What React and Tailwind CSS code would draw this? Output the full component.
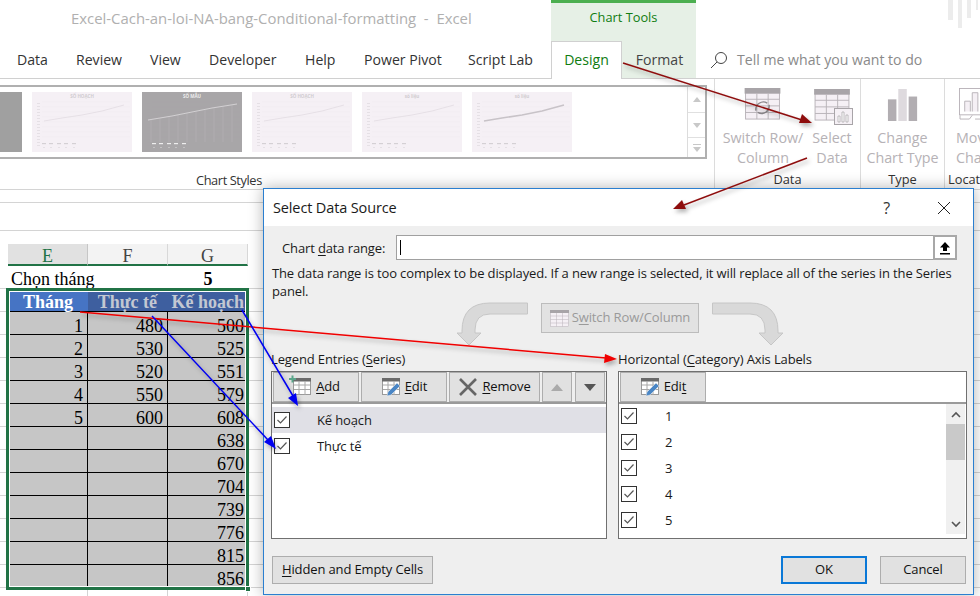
import React from "react";

const UI = "font-['Open_Sans','Noto_Sans',sans-serif]";

function Mn({ children }) {
  return <u className="underline underline-offset-2 decoration-1">{children}</u>;
}

function Thumb({ dark, line = "#e2dce2", thick, title = "SỐ HOẠCH", sticks, w = 100 }) {
  const pts = "12,29 30,26 50,23 70,19 92,13";
  return (
    <div className={`h-[60px] shrink-0 overflow-hidden ${dark ? "bg-[#a8a6a8]" : "bg-[#f5f0f5]"}`} style={{ width: w }}>
      <svg width="100" height="60" viewBox="0 0 100 60">
        <text x="50" y="6" textAnchor="middle" fontSize="4.500" fontWeight="700" fill={dark ? "#eee" : "#d0ccd0"}>{title}</text>
        {[10, 15, 20, 25, 30, 35, 40, 45].map((y) => (
          <line key={y} x1="10" x2="98" y1={y} y2={y} stroke={dark ? "#a8a6a8" : "#f0ecf0"} strokeWidth=".6" />
        ))}
        {[2, 4, 6, 8, 10, 12, 14, 16, 18, 20, 22, 24, 26, 28, 30].map((y) => (
          <rect key={y} x="5" y={8 + y * 1.5} width="3" height=".8" fill={dark ? "#a8a6a8" : "#e2dde2"} />
        ))}
        {sticks && [6, 15, 24, 33, 42, 51, 60, 69, 78, 87].map((x, i) => (
          <line key={x} x1={x + 3} x2={x + 3} y1={28 - i * 1.7} y2="50" stroke="#b5b3b5" strokeWidth=".6" />
        ))}
        <polyline points={dark ? "6,28 30,24 50,20 70,16 95,12" : pts} fill="none" stroke={dark ? "#dddbdd" : line} strokeWidth={thick ? 1.6 : 0.8} />
        {[10, 17, 25, 32, 40].map((x) => (
          <g key={x}>
            <rect x={x} y="51" width="4" height="1.2" fill={dark ? "#eee" : "#d4d0d4"} />
            <rect x={x + 1.5} y="55" width="1" height="1" fill={dark ? "#ddd" : "#d4d0d4"} />
          </g>
        ))}
      </svg>
    </div>
  );
}

function GridIcon({ small }) {
  return (
    <svg width={small ? 19 : 36} height={small ? 17 : 32} viewBox="0 0 38 34" fill="none">
      <rect x="1" y="5" width="36" height="28" fill="#f5f0f5" stroke="#b8b2b8" strokeWidth="1" />
      <rect x="0" y="0" width="38" height="6" fill="#a8a4a8" />
      {[13, 25].map((x) => <line key={x} x1={x} x2={x} y1="6" y2="33" stroke="#b8b2b8" />)}
      {[12, 19, 26].map((y) => <line key={y} x1="1" x2="37" y1={y} y2={y} stroke="#b8b2b8" />)}
    </svg>
  );
}

function TableIcon({ plus, pencil }) {
  return (
    <svg width="20" height="20" viewBox="0 0 20 20" fill="none" className="shrink-0 overflow-visible">
      <rect x="1.500" y="3.500" width="17" height="14" fill="#fff" stroke="#9a9a9a" />
      <rect x="1" y="1" width="18" height="3.500" fill="#6a6a6a" />
      {[7, 13].map((x) => <line key={x} x1={x} x2={x} y1="4" y2="18" stroke="#a8a8a8" />)}
      {[8, 12.5].map((y) => <line key={y} x1="2" x2="18" y1={y} y2={y} stroke="#a8a8a8" />)}
      {plus && <path d="M-3 1h2.500v-2.500h2v2.500h2.500v2h-2.500v2.500h-2v-2.500h-2.500z" fill="#5aa58a" />}
      {pencil && <path d="M6 19l1-4 9-9 3 3-9 9z" fill="#4a86c5" stroke="#eee" strokeWidth=".5" />}
    </svg>
  );
}

function Check() {
  return (
    <span className="flex h-4 w-4 shrink-0 items-center justify-center border border-[#333] bg-white">
      <svg width="12" height="10" viewBox="0 0 12 10" fill="none">
        <path d="M1.500 5l3 3 6-6.500" stroke="#555" strokeWidth="1.200" />
      </svg>
    </span>
  );
}

function Btn({ className = "", children }) {
  return (
    <button className={`flex items-center justify-center border border-[#adadad] bg-[#e1e1e1] text-[#111] ${className}`}>
      {children}
    </button>
  );
}

const CurveArrow = ({ flip }) => (
  <svg width="72" height="44" viewBox="0 0 72 44" className={flip ? "shrink-0 -scale-x-100" : "shrink-0"}>
    <path d="M70.500 1H33Q5 1 5 29V31H0L12 43L24 31H18V28Q18 12 33 12H70.500Z" fill="#d9d9d9" stroke="#c6c6c6" />
  </svg>
);

const tabs = [
  ["Data", 59], ["Review", 74], ["View", 59], ["Developer", 96], ["Help", 59], ["Power Pivot", 104], ["Script Lab", 83],
];

const rows = [
  ["1", "480", "500"], ["2", "530", "525"], ["3", "520", "551"], ["4", "550", "579"], ["5", "600", "608"],
  ["", "", "638"], ["", "", "670"], ["", "", "704"], ["", "", "739"], ["", "", "776"], ["", "", "815"], ["", "", "856"],
];

function Sheet() {
  return (
    <div className="font-['Liberation_Serif',serif] text-[18px] text-black">
      <div className="flex h-[22px] pl-[8px] leading-[24px]">
        <div className="w-[80px] border-r border-b-2 border-r-[#c6c6c6] border-b-[#217346] bg-[#e1e1e1] text-center text-[#217346]">E</div>
        <div className="w-[80px] border-r border-b-2 border-r-[#d8d8d8] border-b-[#217346] bg-[#f3f3f3] text-center text-[#444]">F</div>
        <div className="w-[80px] border-r border-b-2 border-r-[#d8d8d8] border-b-[#217346] bg-[#f3f3f3] text-center text-[#444]">G</div>
      </div>
      <div className="flex h-[23px] leading-[27px]">
        <div className="w-[8px] border-b border-[#d4d4d4]" />
        <div className="w-[160px] pl-[3px]">Chọn tháng</div>
        <div className="w-[80px] text-center font-bold">5</div>
        <div className="flex-1 border-b border-[#d4d4d4]" />
      </div>
      <div className="flex h-[23px] leading-[27px] font-bold">
        <div className="w-[8px] border-b border-[#d4d4d4]" />
        <div className="w-[80px] border-b border-black bg-[#4674c4] pr-[15px] pl-2 text-right text-white">Tháng</div>
        <div className="w-[80px] border-b border-black bg-[#3e5f9f] pr-[11px] text-right text-[#c3c8d2]">Thực tế</div>
        <div className="w-[80px] whitespace-nowrap border-b border-black bg-[#3e5f9f] pr-[4px] text-right text-[#c3c8d2]">Kế hoạch</div>
        <div className="flex-1 border-b border-[#d4d4d4]" />
      </div>
      {rows.map((r, i) => (
        <div key={i} className="flex h-[23px] leading-[28px]">
          <div className="w-[8px] border-b border-[#d4d4d4]" />
          {r.map((c, j) => (
            <div key={j} className={`h-[23px] w-[80px] border-b border-black bg-[#c6c6c6] pr-[4px] text-right ${j < 2 ? "border-r" : ""}`}>{c}</div>
          ))}
          <div className="flex-1 border-b border-[#d4d4d4]" />
        </div>
      ))}
      <div className="flex h-[8px]">
        <div className="w-[88px] border-r border-[#d4d4d4]" />
        <div className="w-[80px] border-r border-[#d4d4d4]" />
        <div className="w-[80px] border-r border-[#d4d4d4]" />
      </div>
    </div>
  );
}

function Dialog() {
  return (
    <div className={`absolute top-[188px] left-[263px] flex h-[407px] w-[711px] flex-col border border-[#2b7fd0] bg-white text-[13px] tracking-[-0.13px] text-[#1a1a1a] shadow-[0_0_14px_rgba(0,0,0,0.3)] ${UI}`}>
      <div className="flex h-[37px] shrink-0 items-center pl-[9px] text-[14.500px]">
        <span>Select Data Source</span>
        <span className="ml-auto text-[16px] text-[#333]">?</span>
        <svg width="14" height="14" viewBox="0 0 14 14" className="mr-[22px] ml-[47px]" fill="none"><path d="M1 1l12 12M13 1L1 13" stroke="#222" /></svg>
      </div>
      <div className="flex flex-1 flex-col bg-[#efefef]">
        <div className="mt-[9px] flex h-[25px] items-center">
          <span className="w-[132px] pt-[2px] pl-[18px] whitespace-nowrap">Chart <Mn>d</Mn>ata range:</span>
          <div className="flex h-[25px] w-[561px] items-center border border-[#a0a0a0] bg-white pl-[3px]">
            <span className="h-[15px] w-px bg-black" />
            <span className="mr-[-1px] ml-auto flex h-[25px] w-[24px] items-center justify-center border-2 border-[#a8a8a8] bg-white">
              <svg width="12" height="14" viewBox="0 0 12 14"><path d="M6 1L1 6.500h3V10h4V6.500h3zM1 12h10v1.500H1z" fill="#000" /></svg>
            </span>
          </div>
        </div>
        <p className="mt-[4px] w-[695px] pl-[8px] leading-[18px]">
          The data range is too complex to be displayed. If a new range is selected, it will replace all of the series in the Series panel.
        </p>
        <div className="mt-[2px] ml-[193px] flex h-[44px] items-start gap-[12px]">
          <CurveArrow />
          <button className="mt-[1px] flex h-[30px] w-[158px] shrink-0 items-center justify-center gap-[3px] border border-[#bcbcbc] bg-[#e2e2e2] text-[#9a9a9a]">
            <GridIcon small />
            <span className="whitespace-nowrap">S<Mn>w</Mn>itch Row/Column</span>
          </button>
          <CurveArrow flip />
        </div>
        <div className="mt-[4px] flex pl-[7px]">
          <div className="w-[336px] leading-[18px]">Legend Entries (<Mn>S</Mn>eries)</div>
          <div className="ml-[11px] leading-[18px]">Horizontal (<Mn>C</Mn>ategory) Axis Labels</div>
        </div>
        <div className="mt-[3px] flex pl-[7px]">
          <div className="flex h-[168px] w-[336px] flex-col border border-[#707070] bg-white">
            <div className="flex h-[32px] shrink-0 gap-[2px] border-b-2 border-b-[#9a9a9a] bg-[#efefef] pl-px">
              <Btn className="h-[30px] w-[86px] gap-1"><TableIcon plus /><span><Mn>A</Mn>dd</span></Btn>
              <Btn className="h-[30px] w-[86px] gap-1"><TableIcon pencil /><span><Mn>E</Mn>dit</span></Btn>
              <Btn className="h-[30px] w-[91px] gap-1">
                <svg width="20" height="20" viewBox="0 0 20 20"><path d="M2 2l16 16M18 2L2 18" stroke="#666" strokeWidth="2.600" /></svg>
                <span><Mn>R</Mn>emove</span>
              </Btn>
              <Btn className="h-[30px] w-[30px]"><svg width="12" height="7" viewBox="0 0 12 7"><path d="M6 0l6 7H0z" fill="#aaa" /></svg></Btn>
              <Btn className="ml-px h-[30px] w-[30px]"><svg width="12" height="7" viewBox="0 0 12 7"><path d="M0 0h12L6 7z" fill="#555" /></svg></Btn>
            </div>
            <div className="pt-[3px]">
              <div className="flex h-[26px] items-center bg-[#e0e0e6] pl-[2px]"><Check /><span className="ml-[27px] pt-[2px]">Kế hoạch</span></div>
              <div className="flex h-[26px] items-center pl-[2px]"><Check /><span className="ml-[27px] pt-[2px]">Thực tế</span></div>
            </div>
          </div>
          <div className="ml-[11px] flex h-[168px] w-[349px] flex-col border border-[#707070] bg-white">
            <div className="flex h-[32px] shrink-0 border-b-2 border-b-[#9a9a9a] pl-px">
              <Btn className="h-[30px] w-[86px] gap-1"><TableIcon pencil /><span>Edi<Mn>t</Mn></span></Btn>
            </div>
            <div className="flex flex-1">
              <div className="-mt-px flex-1">
                {["1", "2", "3", "4", "5"].map((n) => (
                  <div key={n} className="flex h-[26px] items-center pl-[2px]"><Check /><span className="ml-[28px] pt-[2px]">{n}</span></div>
                ))}
              </div>
              <div className="mr-px flex h-[130px] w-[19px] flex-col bg-[#f0f0f0]">
                <div className="flex h-[20px] items-center justify-center">
                  <svg width="10" height="7" viewBox="0 0 10 7" fill="none"><path d="M1 6l4-4 4 4" stroke="#555" strokeWidth="1.600" /></svg>
                </div>
                <div className="h-[36px] bg-[#c9c9c9]" />
                <div className="mt-auto flex h-[20px] items-center justify-center">
                  <svg width="10" height="7" viewBox="0 0 10 7" fill="none"><path d="M1 1l4 4 4-4" stroke="#555" strokeWidth="1.600" /></svg>
                </div>
              </div>
            </div>
          </div>
        </div>
        <div className="mt-[17px] flex pl-[8px]">
          <Btn className="h-[28px] w-[161px]"><span><Mn>H</Mn>idden and Empty Cells</span></Btn>
          <button className="ml-[348px] h-[28px] w-[86px] border-2 border-[#0a78d7] bg-[#e1e1e1] text-[#111]">OK</button>
          <Btn className="ml-[13px] h-[28px] w-[86px]">Cancel</Btn>
        </div>
      </div>
    </div>
  );
}

function Arrows() {
  return (
    <svg width="980" height="596" viewBox="0 0 980 596" fill="none" className="pointer-events-none absolute inset-0">
      <defs>
        <filter id="sh" x="-10%" y="-10%" width="120%" height="130%">
          <feDropShadow dx="2" dy="3" stdDeviation="2" floodColor="#000" floodOpacity="0.3" />
        </filter>
      </defs>
      <g filter="url(#sh)">
        <path d="M623 63L802 120" stroke="#8e0f0f" strokeWidth="1.500" />
        <path d="M812 123L799 123L802 114Z" fill="#8e0f0f" />
        <path d="M807 158L684 205" stroke="#8e0f0f" strokeWidth="1.500" />
        <path d="M673 209L682 200L686 209Z" fill="#8e0f0f" />
        <path d="M80 312L606 358" stroke="#f00000" strokeWidth="1.500" />
        <path d="M617 359L604 363L605 354Z" fill="#f00000" />
        <path d="M152 316L268 440" stroke="#0000f0" strokeWidth="1.500" />
        <path d="M276 449L264 442L271 436Z" fill="#0000f0" />
        <path d="M242 310L293 396" stroke="#0000f0" strokeWidth="1.500" />
        <path d="M298 406L288 398L296 393Z" fill="#0000f0" />
      </g>
    </svg>
  );
}

export default function App() {
  const disabled = "text-[#b6b2b6] leading-[20px] text-center text-[14.300px] whitespace-nowrap";
  const groupLabel = "pt-[1px] text-[12.800px] leading-[18px] text-[#333] whitespace-nowrap";
  return (
    <div className={`relative h-[596px] w-[980px] overflow-hidden bg-white ${UI}`}>
      <div className="flex h-[41px]">
        <div className="w-[551px] pt-[7px] pl-[71px] text-[14.900px] whitespace-pre text-[#b0b0b0]">Excel-Cach-an-loi-NA-bang-Conditional-formatting  -  Excel</div>
        <div className="w-[145px] border-t-[3px] border-t-[#4caf50] bg-[#e6f0e6] pt-[5px] text-center text-[12.800px] text-[#107c10]">Chart Tools</div>
        <div className="ml-auto">
          <svg width="30" height="30" viewBox="0 0 30 30" className="mr-[2px]">
            <path d="M0 0h5v20H0zM10 0h4v28h-4zM19 0h4v18h-4zM28 0h2v10h-2z" fill="#ececec" />
          </svg>
        </div>
      </div>
      <div className="flex h-[38px] border-b border-[#d0d0d0] text-[14.100px] text-[#333]">
        <div className="flex w-[551px] items-center pl-[17px]">
          {tabs.map(([t, w]) => (
            <span key={t} className="whitespace-nowrap" style={{ width: w }}>{t}</span>
          ))}
        </div>
        <div className="mb-[-1px] flex w-[71px] items-center justify-center border border-b-0 border-[#d0d0d0] bg-white pb-[1px] text-[#107c10]">Design</div>
        <div className="flex w-[74px] items-center justify-center bg-[#e6f0e6] pl-[1px] text-[#444]">Format</div>
        <div className="ml-[14px] flex items-center gap-[9px] text-[#8a8a8a]">
          <svg width="18" height="18" viewBox="0 0 18 18" fill="none"><circle cx="11" cy="7" r="5.500" stroke="#444" /><path d="M7 11l-6 6" stroke="#444" /></svg>
          <span className="whitespace-nowrap">Tell me what you want to do</span>
        </div>
      </div>
      <div className="flex h-[111px] border-b border-[#d4d4d4]">
        <div className="w-[715px] shrink-0 border-r border-[#dcdcdc]">
          <div className="mt-[6px] flex h-[74px] w-[707px] border-y-2 border-r-2 border-[#b0b0b0]">
            <div className="flex flex-1 items-center gap-[10px]">
              <div className="h-[60px] w-[22px] bg-[#a0a0a0]" />
              <Thumb title="SỐ HOẠCH" />
              <Thumb dark sticks title="SỐ MẪU" />
              <Thumb title="SỐ HOẠCH" />
              <Thumb title="số liệu" />
              <Thumb thick line="#c8c3c8" title="số liệu" />
            </div>
            <div className="flex w-[18px] flex-col border-l border-[#dcdcdc] text-[#b8b8b8]">
              <div className="flex h-[26px] items-center justify-center border-b border-[#e0e0e0]"><svg width="8" height="5" viewBox="0 0 8 5"><path d="M4 0l4 5H0z" fill="#c8c8c8" /></svg></div>
              <div className="flex h-[25px] items-center justify-center border-b border-[#e0e0e0]"><svg width="8" height="5" viewBox="0 0 8 5"><path d="M0 0h8L4 5z" fill="#c8c8c8" /></svg></div>
              <div className="flex flex-1 items-center justify-center"><svg width="8" height="8" viewBox="0 0 8 8"><path d="M0 0h8v1H0zM0 3h8L4 8z" fill="#c8c8c8" /></svg></div>
            </div>
          </div>
          <div className="mt-[12px] pl-[196px] text-[12.800px] leading-[18px] tracking-[-0.4px] text-[#333]">Chart Styles</div>
        </div>
        <div className="flex w-[146px] shrink-0 flex-col border-r border-[#dcdcdc]">
          <div className="flex h-[90px]">
            <div className="flex w-[91px] flex-col items-center pt-[9px] pl-[5px]">
              <svg width="37" height="32" viewBox="0 0 38 34" fill="none" className="mr-[2px]">
                <rect x="1" y="5" width="36" height="28" fill="#f5f0f5" stroke="#b8b2b8" />
                <rect x="0" y="0" width="38" height="6" fill="#a8a4a8" />
                {[13, 25].map((x) => <line key={x} x1={x} x2={x} y1="6" y2="33" stroke="#b8b2b8" />)}
                {[12, 19, 26].map((y) => <line key={y} x1="1" x2="37" y1={y} y2={y} stroke="#b8b2b8" />)}
                <path d="M12 24a8 8 0 0 1 12-8M26 18a8 8 0 0 1-12 8" stroke="#8a868a" strokeWidth="1.500" />
              </svg>
              <div className={`mt-[8px] ${disabled}`}>Switch Row/<br />Column</div>
            </div>
            <div className="flex w-[52px] flex-col items-center pt-[10px]">
              <div className="relative h-[31px] w-[36px]">
                <GridIcon />
                <svg width="19" height="17" viewBox="0 0 19 17" className="absolute right-[-3px] bottom-[-5px]" fill="none">
                  <rect x=".5" y=".5" width="18" height="16" fill="#f5f0f5" stroke="#a8a4a8" />
                  <path d="M4 14V8h2v6zM8 14V4h2v10zM12 14V7h2v7z" stroke="#a8a4a8" strokeWidth=".7" fill="#fff" />
                </svg>
              </div>
              <div className={`mt-[8px] ${disabled}`}>Select<br />Data</div>
            </div>
          </div>
          <div className={`text-center ${groupLabel}`}>Data</div>
        </div>
        <div className="flex w-[84px] shrink-0 flex-col border-r border-[#dcdcdc]">
          <div className="flex h-[90px] flex-col items-center pt-[10px]">
            <svg width="32" height="32" viewBox="0 0 34 34"><rect x="1" y="11" width="9" height="23" fill="#b2aeb2" /><rect x="12" y="0" width="9" height="34" fill="#dedade" /><rect x="23" y="8" width="9" height="26" fill="#b2aeb2" /></svg>
            <div className={`mt-[7px] ${disabled}`}>Change<br />Chart Type</div>
          </div>
          <div className={`text-center ${groupLabel}`}>Type</div>
        </div>
        <div className="flex-1 overflow-hidden pl-[3px]">
          <div className="flex h-[90px] flex-col pt-[9px]">
            <svg width="36" height="32" viewBox="0 0 36 34" className="ml-[10px] shrink-0" fill="none">
              <rect x=".5" y=".5" width="33" height="28" stroke="#b8b2b8" />
              <path d="M6 25V14h6v11M14 25V5h6v20" stroke="#b8b2b8" fill="#f5f0f5" />
              <path d="M1 29v4h10l3-4M17 33h16v-4" stroke="#b8b2b8" />
            </svg>
            <div className="mt-[8px] pl-[8px] text-[14.300px] leading-[20px] whitespace-nowrap text-[#b6b2b6]">Move<br />Chart</div>
          </div>
          <div className={groupLabel}>Location</div>
        </div>
      </div>
      <div className="h-[13px] border-b border-[#d4d4d4]" />
      <div className="h-[28px] border-b border-[#d4d4d4]" />
      <div className="h-[13px]" />
      <Sheet />
      <div className="pointer-events-none absolute top-[288px] left-[6px] h-[302px] w-[243px] border-[3px] border-[#217346] shadow-[inset_0_0_0_1px_#fff]" />
      <div className="absolute top-[586px] left-[245px] h-[6px] w-[6px] border border-white bg-[#217346]" />
      <Dialog />
      <Arrows />
    </div>
  );
}
